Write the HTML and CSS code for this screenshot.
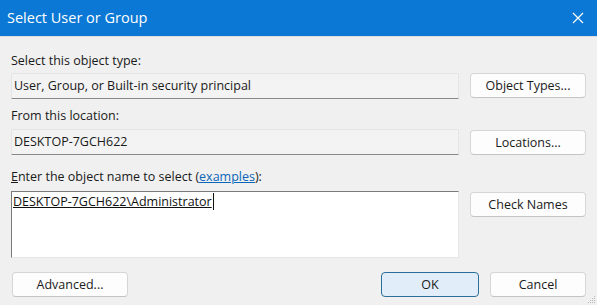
FILE: index.html
```
<!DOCTYPE html>
<html>
<head>
<meta charset="utf-8">
<link rel="stylesheet" href="styles.css">
</head>
<body>
<div class="dialog">
  <div class="titlebar">
    <span class="title">Select User or Group</span>
    <svg class="close" width="12" height="12" viewBox="0 0 12 12"><path d="M1 1L11 11M11 1L1 11" stroke="#fff" stroke-width="1.2" fill="none"/></svg>
  </div>
  <div class="content">
    <div class="label l1">Select this object type:</div>
    <div class="row r1">
      <div class="field">User, Group, or Built-in security principal</div>
      <div class="btn">Object Types...</div>
    </div>
    <div class="label l2">From this location:</div>
    <div class="row r2">
      <div class="field">DESKTOP-7GCH622</div>
      <div class="btn">Locations...</div>
    </div>
    <div class="label l3"><u>E</u>nter the object name to select (<span class="link">examples</span>):</div>
    <div class="row r3">
      <div class="textarea"><span class="name">DESKTOP-7GCH622\Administrator</span></div>
      <div class="btn b3">Check Names</div>
    </div>
    <div class="footer">
      <div class="btn adv">Advanced...</div>
      <div class="spacer"></div>
      <div class="btn ok">OK</div>
      <div class="btn cancel">Cancel</div>
    </div>
  </div>
  <svg class="grip" width="8" height="8" viewBox="0 0 8 8"><g fill="#b8b8b8"><rect x="6" y="0" width="1" height="1"/><rect x="4" y="2" width="1" height="1"/><rect x="6" y="2" width="1" height="1"/><rect x="2" y="4" width="1" height="1"/><rect x="4" y="4" width="1" height="1"/><rect x="6" y="4" width="1" height="1"/><rect x="0" y="6" width="1" height="1"/><rect x="2" y="6" width="1" height="1"/><rect x="4" y="6" width="1" height="1"/><rect x="6" y="6" width="1" height="1"/></g></svg>
</div>
</body>
</html>
```
FILE: styles.css
```
html, body {
  margin: 0;
  padding: 0;
}
body {
  font-family: "Open Sans", "Noto Sans", sans-serif;
  font-size: 12.5px;
  color: #1a1a1a;
  background: #f0f0f0;
}
.dialog {
  position: relative;
  width: 597px;
  height: 305px;
  background: #f0f0f0;
  overflow: hidden;
}
.titlebar {
  height: 37px;
  background: #0a78d4;
  display: flex;
  align-items: center;
  justify-content: space-between;
  padding: 0 12px 0 7px;
  border-bottom: 1px solid #dcdcdc;
  box-sizing: border-box;
}
.title {
  color: #fff;
  font-size: 14.5px;
  padding-bottom: 1px;
}
.close {
  margin-right: 1px;
}
.content {
  padding: 0 11px;
  display: flex;
  flex-direction: column;
}
.label {
  height: 18px;
  line-height: 18px;
}
.l1 { margin-top: 15px; }
.l2 { margin-top: 8px; }
.l3 { margin-top: 13px; }
.link {
  color: #0a66b8;
  text-decoration: underline;
}
.row {
  display: flex;
  gap: 11px;
}
.r1 { margin-top: 3px; align-items: flex-start; }
.r2 { margin-top: 4px; align-items: center; }
.r3 { margin-top: 5px; align-items: flex-start; }
.field {
  flex: 1;
  height: 26px;
  box-sizing: border-box;
  border: 1px solid #e4e4e4;
  border-bottom: 1px solid #8a8a8a;
  background: #f3f3f3;
  line-height: 24px;
  padding-left: 2px;
  border-radius: 2px 2px 0 0;
}
.btn {
  width: 116px;
  height: 25px;
  box-sizing: border-box;
  border: 1px solid #d6d6d6;
  border-bottom-color: #c4c4c4;
  border-radius: 4px;
  background: #fdfdfd;
  text-align: center;
  line-height: 23px;
  flex: none;
}
.b3 { margin-top: 1px; }
.textarea {
  flex: 1;
  height: 67px;
  box-sizing: border-box;
  background: #fff;
  border: 1px solid #e6e6e6;
  border-top: 1px solid #7a7a7a;
  border-left: 1px solid #7a7a7a;
  padding: 1px 0 0 1px;
  line-height: 18px;
}
.name {
  color: #111;
  text-decoration: underline;
  border-right: 1px solid #111;
  padding-right: 1px;
}
.footer {
  display: flex;
  margin-top: 14px;
  gap: 11px;
  margin-right: 0;
}
.spacer { flex: 1; }
.adv { margin-left: 1px; }
.ok {
  width: 98px;
  background: #e1eef9;
  border: 1px solid #2c6e9a;
}
.cancel {
  width: 96px;
}
.grip {
  position: absolute;
  right: 1px;
  bottom: 1px;
}
```
